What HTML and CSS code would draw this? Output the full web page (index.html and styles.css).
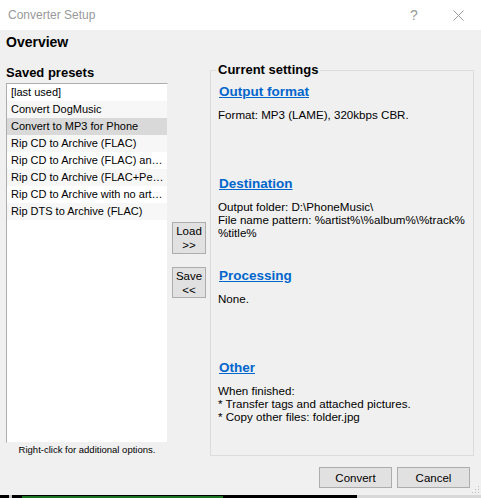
FILE: index.html
```html
<!DOCTYPE html>
<html lang="en">
<head>
    <meta charset="UTF-8">
    <meta name="viewport" content="width=device-width, initial-scale=1.0">
    <title>Converter Setup</title>
    <link rel="stylesheet" href="styles.css">
</head>
<body>
    <div class="window">
        <div class="titlebar">
            <span class="title">Converter Setup</span>
            <span class="help">?</span>
            <span class="close">
                <svg width="11" height="11" viewBox="0 0 11 11"><path d="M0.5 0.5L10.5 10.5M10.5 0.5L0.5 10.5" stroke="#9a9a9a" stroke-width="1" fill="none"/></svg>
            </span>
        </div>
        <div class="dialog">
            <h1>Overview</h1>
            <div class="main">
                <div class="presets">
                    <h2>Saved presets</h2>
                    <ul class="list">
                        <li>[last used]</li>
                        <li>Convert DogMusic</li>
                        <li class="selected">Convert to MP3 for Phone</li>
                        <li>Rip CD to Archive (FLAC)</li>
                        <li>Rip CD to Archive (FLAC) an…</li>
                        <li>Rip CD to Archive (FLAC+Pe…</li>
                        <li>Rip CD to Archive with no art…</li>
                        <li>Rip DTS to Archive (FLAC)</li>
                    </ul>
                    <p class="hint">Right-click for additional options.</p>
                </div>
                <div class="arrows">
                    <button class="btn small">Load<br>&gt;&gt;</button>
                    <button class="btn small">Save<br>&lt;&lt;</button>
                </div>
                <fieldset class="settings">
                    <legend>Current settings</legend>
                    <div class="sections">
                        <div class="section">
                            <a href="#" class="heading">Output format</a>
                            <p>Format: MP3 (LAME), 320kbps CBR.</p>
                        </div>
                        <div class="section">
                            <a href="#" class="heading">Destination</a>
                            <p>Output folder: D:\PhoneMusic\<br>File name pattern: %artist%\%album%\%track%<br>%title%</p>
                        </div>
                        <div class="section">
                            <a href="#" class="heading">Processing</a>
                            <p>None.</p>
                        </div>
                        <div class="section">
                            <a href="#" class="heading">Other</a>
                            <p>When finished:<br>* Transfer tags and attached pictures.<br>* Copy other files: folder.jpg</p>
                        </div>
                    </div>
                </fieldset>
            </div>
            <div class="footer">
                <button class="btn wide">Convert</button>
                <button class="btn wide">Cancel</button>
            </div>
            <svg class="grip" width="9" height="9" viewBox="0 0 9 9">
                <rect x="7" y="1" width="1" height="1" fill="#bcbcbc"/>
                <rect x="4" y="4" width="1" height="1" fill="#bcbcbc"/>
                <rect x="7" y="4" width="1" height="1" fill="#bcbcbc"/>
                <rect x="1" y="7" width="1" height="1" fill="#bcbcbc"/>
                <rect x="4" y="7" width="1" height="1" fill="#bcbcbc"/>
                <rect x="7" y="7" width="1" height="1" fill="#bcbcbc"/>
            </svg>
        </div>
    </div>
    <div class="desktop">
        <span class="edge"></span>
        <span class="console"></span>
        <span class="tray"></span>
    </div>
</body>
</html>
```

FILE: styles.css
```css
* {
    box-sizing: border-box;
}
html, body {
    margin: 0;
    padding: 0;
    overflow: hidden;
}
body {
    width: 481px;
    height: 498px;
    font-family: "Liberation Sans", Arial, sans-serif;
    font-size: 12px;
    color: #000;
    background: #000;
}
.window {
    height: 495px;
    display: flex;
    flex-direction: column;
    background: #f0f0f0;
}
.titlebar {
    height: 30px;
    background: #fff;
    display: flex;
    align-items: center;
    color: #999;
    font-size: 12px;
}
.title {
    padding-left: 8px;
    flex: 1;
}
.help {
    width: 12px;
    font-size: 14px;
    margin-right: 31px;
}
.close {
    display: flex;
    margin-right: 17px;
}
.dialog {
    flex: 1;
    position: relative;
}
h1 {
    margin: 4px 0 0;
    padding-left: 6px;
    font-size: 14px;
    line-height: 16px;
}
.main {
    display: flex;
    margin-top: 12px;
    padding-left: 6px;
}
.presets {
    width: 162px;
}
h2 {
    margin: 0;
    font-size: 13px;
    line-height: 21px;
}
.list {
    list-style: none;
    margin: 0;
    padding: 0;
    height: 360px;
    font-size: 11px;
    background: #fff;
    border: 1px solid #adadad;
    border-right-color: #f0f0f0;
    border-bottom-color: #f0f0f0;
}
.list li {
    height: 17px;
    line-height: 17px;
    padding-left: 4px;
    white-space: nowrap;
    overflow: hidden;
}
.list li:nth-child(even) {
    background: #f7f7f7;
}
.list li.selected {
    background: #d9d9d9;
}
.hint {
    margin: 0;
    font-size: 9.5px;
    line-height: 13px;
    text-align: center;
}
.arrows {
    width: 42px;
    padding: 160px 0 0 4px;
    display: flex;
    flex-direction: column;
    gap: 13px;
}
.btn {
    font-family: inherit;
    font-size: 11.5px;
    background: #e1e1e1;
    border: 1px solid #adadad;
    padding: 0;
    color: #000;
}
.btn.small {
    width: 34px;
    height: 32px;
    line-height: 14px;
}
.btn.small + .btn.small {
    height: 31px;
}
.settings {
    width: 264px;
    margin: 0;
    padding: 0 5px 1px;
    border: 1px solid #dcdcdc;
    min-width: 0;
}
.settings legend {
    padding: 0 2px;
    font-size: 13px;
    font-weight: bold;
    line-height: 16px;
}
.sections {
    padding: 6px 0 0 3px;
}
.section {
    height: 92px;
}
.heading {
    display: block;
    color: #0066cc;
    font-weight: bold;
    font-size: 13.5px;
    line-height: 16px;
    margin-bottom: 8px;
}
.section p {
    margin: 0 0 0 -1px;
    font-size: 11.6px;
    line-height: 13px;
    white-space: nowrap;
}
.footer {
    display: flex;
    justify-content: flex-end;
    gap: 5px;
    margin-top: 11px;
    padding-right: 11px;
}
.btn.wide {
    width: 73px;
    height: 21px;
}
.grip {
    position: absolute;
    right: 1px;
    bottom: 1px;
}
.desktop {
    height: 3px;
    display: flex;
    background: #000;
}
.edge {
    width: 3px;
    margin-left: 9px;
    background: #c8c8c8;
}
.console {
    width: 335px;
    margin: 1px 0 0 10px;
    background: linear-gradient(90deg, #2fbf3a 0 60%, #000 60% 100%);
    opacity: 0.6;
}
.tray {
    flex: 1;
    background: #d8d8d8;
}
```
